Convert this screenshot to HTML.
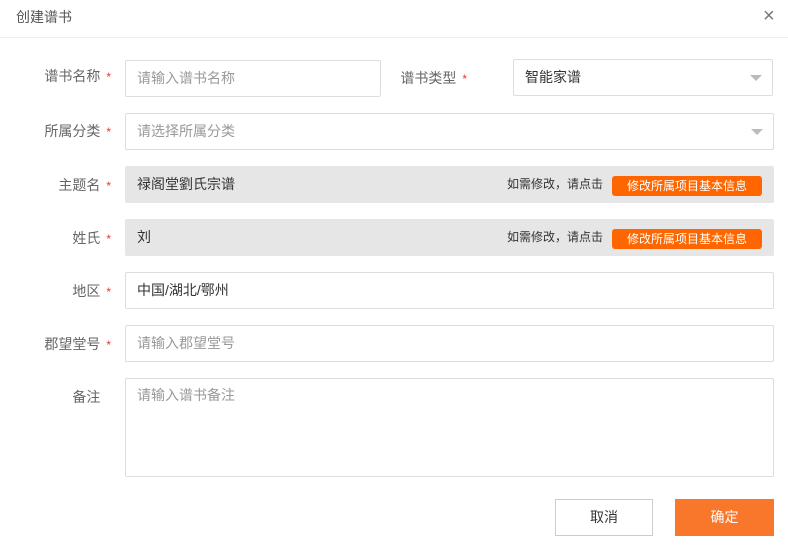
<!DOCTYPE html>
<html><head><meta charset="utf-8"><style>
*{box-sizing:border-box;margin:0;padding:0}
body{width:788px;height:554px;background:#fff;font-family:"Liberation Sans","Noto Sans CJK SC",sans-serif;font-size:14px;color:#333;position:relative;overflow:hidden}
.a{position:absolute}
.hdr{left:0;top:0;width:788px;height:38px;border-bottom:1px solid #eee}
.title{left:16px;top:7px;font-size:14px;color:#555}
.lbl{width:111px;text-align:right;color:#666;font-size:14px;line-height:20px}
.st{color:#e33;font-size:12px;margin-left:6px}
.in{border:1px solid #ddd;border-radius:2px;background:#fff;padding-left:11px;line-height:35px;color:#999}
.g{background:#e6e6e6;border-color:#e6e6e6;color:#333}
.ar{position:absolute;right:10px;top:15px;width:0;height:0;border-left:6px solid transparent;border-right:6px solid transparent;border-top:6px solid #bbb}
.hint{position:absolute;right:170px;top:0;font-size:12px;color:#333}
.ob{position:absolute;right:11px;top:9px;width:150px;height:20px;background:#f60;color:#fff;border-radius:3px;font-size:12px;line-height:20px;text-align:center}
</style></head><body>
<div class="a hdr"></div>
<div class="a title">创建谱书</div>
<div class="a" style="left:763px;top:7px;font-size:20px;color:#777;line-height:18px;font-weight:300">×</div>

<div class="a lbl" style="left:0;top:66px">谱书名称<span class="st">*</span></div>
<div class="a in" style="left:125px;top:60px;width:256px;height:37px">请输入谱书名称</div>
<div class="a lbl" style="left:356px;top:68px">谱书类型<span class="st">*</span></div>
<div class="a in" style="left:513px;top:59px;width:260px;height:37px;color:#333">智能家谱<span class="ar"></span></div>

<div class="a lbl" style="left:0;top:121px">所属分类<span class="st">*</span></div>
<div class="a in" style="left:125px;top:113px;width:649px;height:37px">请选择所属分类<span class="ar"></span></div>

<div class="a lbl" style="left:0;top:175px">主题名<span class="st">*</span></div>
<div class="a in g" style="left:125px;top:166px;width:649px;height:37px">禄阁堂劉氏宗谱<span class="hint">如需修改，请点击</span><span class="ob">修改所属项目基本信息</span></div>

<div class="a lbl" style="left:0;top:228px">姓氏<span class="st">*</span></div>
<div class="a in g" style="left:125px;top:219px;width:649px;height:37px">刘<span class="hint">如需修改，请点击</span><span class="ob">修改所属项目基本信息</span></div>

<div class="a lbl" style="left:0;top:281px">地区<span class="st">*</span></div>
<div class="a in" style="left:125px;top:272px;width:649px;height:37px;color:#333">中国/湖北/鄂州</div>

<div class="a lbl" style="left:0;top:334px">郡望堂号<span class="st">*</span></div>
<div class="a in" style="left:125px;top:325px;width:649px;height:37px">请输入郡望堂号</div>

<div class="a lbl" style="left:0;top:387px">备注<span style="visibility:hidden" class="st">*</span></div>
<div class="a in" style="left:125px;top:378px;width:649px;height:99px;line-height:32px">请输入谱书备注</div>

<div class="a" style="left:555px;top:499px;width:98px;height:37px;border:1px solid #ccc;text-align:center;line-height:35px;color:#333">取消</div>
<div class="a" style="left:675px;top:499px;width:99px;height:37px;background:#f8772a;text-align:center;line-height:37px;color:#fff">确定</div>
</body></html>
